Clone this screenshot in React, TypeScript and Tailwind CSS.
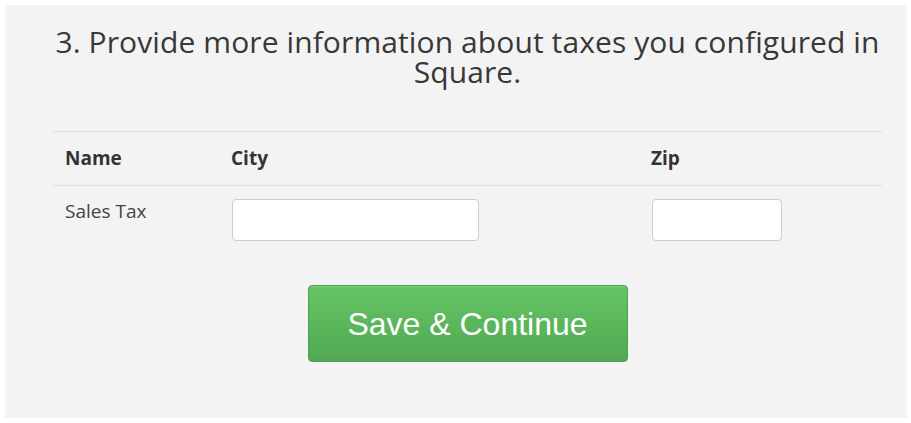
export default function App() {
  return (
    <div className="min-h-screen bg-white pl-[5px] pt-[5px]">
      <div className="w-[902px] h-[413px] bg-[#f3f3f3] pt-[22px] pl-[48px] pr-[25px] font-['Open_Sans',sans-serif]">
        <h1 className="text-center text-[30px] leading-[30px] tracking-[0.1px] text-[#383838] font-normal">
          3. Provide more information about taxes you configured in Square.
        </h1>

        <div className="mt-[44px] border-t border-[#dedede]">
          <div className="grid grid-cols-[166px_420px_1fr] border-b border-[#dedede] text-[19px] leading-6 font-bold text-[#333]">
            <div className="px-3 pt-[14px] pb-[15px]">Name</div>
            <div className="px-3 pt-[14px] pb-[15px]">City</div>
            <div className="px-3 pt-[14px] pb-[15px]">Zip</div>
          </div>
          <div className="grid grid-cols-[166px_420px_1fr] text-[19px] leading-6 text-[#444]">
            <div className="px-3 pt-[13px]">Sales Tax</div>
            <div className="pl-[13px] pt-[13px]">
              <input className="block w-[247px] h-[42px] bg-white border border-[#cccccc] rounded-[4px] outline-none" />
            </div>
            <div className="pl-[13px] pt-[13px]">
              <input className="block w-[130px] h-[42px] bg-white border border-[#cccccc] rounded-[4px] outline-none" />
            </div>
          </div>
        </div>

        <div className="flex justify-center mt-[44px]">
          <button className="w-[320px] h-[77px] rounded-[4px] border border-[#4f9f4f] bg-gradient-to-b from-[#65c565] to-[#52a852] text-white text-[32px] font-['Liberation_Sans',sans-serif] shadow-[inset_0_1px_0_rgba(255,255,255,0.15)]">
            Save &amp; Continue
          </button>
        </div>
      </div>
    </div>
  );
}
